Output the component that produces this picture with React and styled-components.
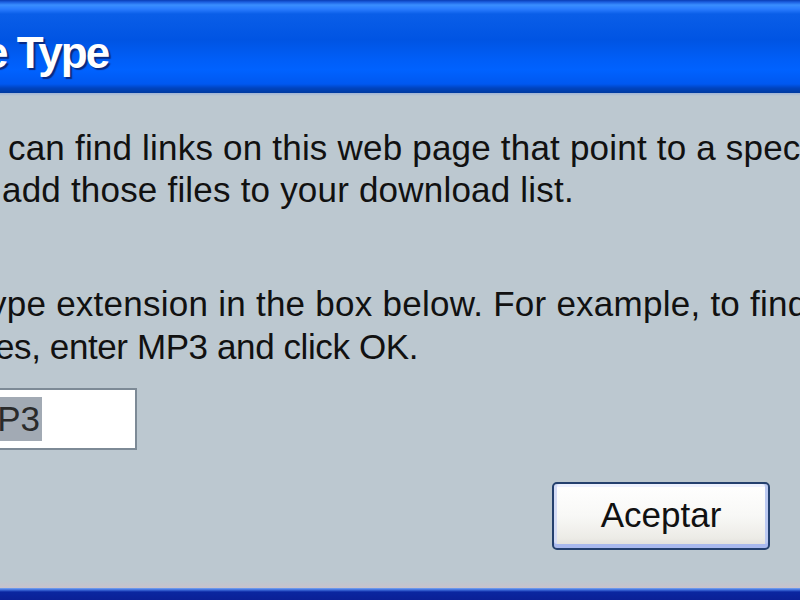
import React from 'react';
import styled, { createGlobalStyle } from 'styled-components';

const GlobalStyle = createGlobalStyle`
  html, body {
    margin: 0;
    padding: 0;
    width: 800px;
    height: 600px;
    overflow: hidden;
    background: #bcc8d0;
  }
`;

const Window = styled.div`
  display: flex;
  flex-direction: column;
  width: 800px;
  height: 600px;
  overflow: hidden;
  font-family: "Liberation Sans", Arial, sans-serif;
`;

const TitleBar = styled.div`
  height: 93px;
  flex: none;
  padding-top: 31px;
  box-sizing: border-box;
  overflow: hidden;
  background: linear-gradient(
    to bottom,
    #0a3cb4 0px,
    #1a5ee0 2px,
    #3a8eff 5px,
    #2a7cff 9px,
    #0a5ee8 14px,
    #0054e3 40px,
    #005ef8 60px,
    #0062ff 70px,
    #0058f0 84px,
    #0044c0 88px,
    #003a9e 93px
  );
`;

const Title = styled.div`
  margin-left: -16px;
  font-weight: bold;
  font-size: 44px;
  line-height: 44px;
  letter-spacing: -2px;
  color: #ffffff;
  white-space: nowrap;
  text-shadow: 2px 2px 1px #0a2a80;
`;

const Body = styled.div`
  flex: 1;
  display: flex;
  flex-direction: column;
  padding: 34px 30px 0 0;
  overflow: hidden;
  background: linear-gradient(to bottom, #9fb4d6 0px, #bcc8d0 3px, #bcc8d0 488px, #c8c2cc 495px);
`;

const Paragraph = styled.div`
  display: flex;
  flex-direction: column;
  margin-top: ${p => p.$gap || 0}px;
`;

const Line = styled.div`
  margin-left: ${p => p.$indent}px;
  font-size: 35px;
  line-height: ${p => p.$lh || 42}px;
  height: ${p => p.$lh || 42}px;
  letter-spacing: ${p => p.$ls || 0}px;
  color: #111111;
  white-space: nowrap;
`;

const Field = styled.div`
  margin-top: 20px;
  margin-left: -40px;
  width: 177px;
  height: 62px;
  box-sizing: border-box;
  border: 2px solid #7d8a96;
  background: #ffffff;
  padding: 7px 0 0 6px;
  font-size: 35px;
  line-height: 44px;
  color: #2a2a2a;
  white-space: nowrap;
`;

const Selected = styled.span`
  display: inline-block;
  background: #a2aab4;
  height: 44px;
  padding-right: 2px;
`;

const ButtonRow = styled.div`
  display: flex;
  justify-content: flex-end;
  margin-top: 32px;
`;

const Button = styled.div`
  width: 218px;
  height: 68px;
  box-sizing: border-box;
  border: 2px solid #24406e;
  border-radius: 5px;
  display: flex;
  align-items: center;
  justify-content: center;
  font-size: 35px;
  color: #111;
  background: linear-gradient(to bottom, #ffffff 0%, #f8f8f6 50%, #ecebe6 85%, #dedcd6 100%);
  box-shadow:
    inset 0 -4px 0 #a9b9ee,
    inset 3px 0 0 #d4dcf6,
    inset -3px 0 0 #bccaf2,
    inset 0 3px 0 #eef2ff;
  padding-bottom: 2px;
`;

const BottomEdge = styled.div`
  height: 12px;
  flex: none;
  background: linear-gradient(to bottom, #7aa6f2 0px, #3a68d8 2px, #0a26a0 4px, #0a2096 12px);
`;

export default function App() {
  return (
    <Window>
      <GlobalStyle />
      <TitleBar>
        <Title>e Type</Title>
      </TitleBar>
      <Body>
        <Paragraph>
          <Line $indent={8} $ls={0.2}>can find links on this web page that point to a specific</Line>
          <Line $indent={2} $ls={0.2}>add those files to your download list.</Line>
        </Paragraph>
        <Paragraph $gap={71}>
          <Line $indent={-11} $lh={43} $ls={0.25}>ype extension in the box below. For example, to find</Line>
          <Line $indent={-5} $lh={43} $ls={-0.4}>es, enter MP3 and click OK.</Line>
        </Paragraph>
        <Field>
          <Selected>MP3</Selected>
        </Field>
        <ButtonRow>
          <Button>Aceptar</Button>
        </ButtonRow>
      </Body>
      <BottomEdge />
    </Window>
  );
}
